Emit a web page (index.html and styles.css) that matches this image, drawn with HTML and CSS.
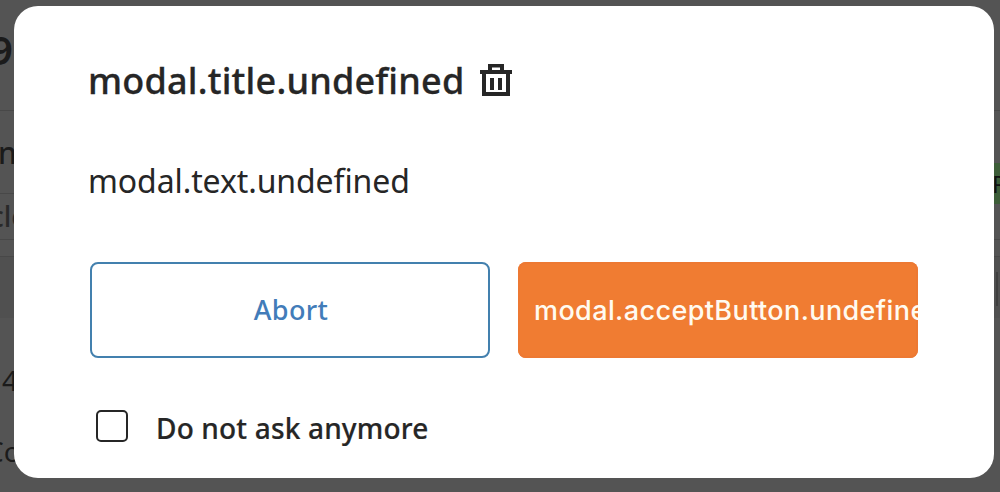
FILE: index.html
```html
<!DOCTYPE html>
<html lang="en">
<head>
<meta charset="utf-8">
<title>Confirm</title>
<link rel="stylesheet" href="styles.css">
</head>
<body>
<div class="stage">
  <div class="page">
    <div class="row row-heading"><span class="edge">9</span></div>
    <div class="row row-name"><span class="edge">n</span><span class="badge">R</span></div>
    <div class="row row-article"><span class="edge">cle</span></div>
    <div class="row row-gap"></div>
    <div class="row row-band"><span class="handle"></span></div>
    <div class="row row-count"><span class="edge">4</span></div>
    <div class="row row-code"><span class="edge">Co</span></div>
  </div>
  <main class="modal" role="dialog">
    <h1 class="title"><span class="title-text">modal.title.undefined</span>
      <svg class="trash" viewBox="0 0 32 32" width="32" height="32" fill="#262626" fill-rule="evenodd"><path d="M8 0H24V6H32V10H30V32H2V10H0V6H8ZM12 3.5V6H20V3.5ZM6 10V28H26V10ZM10 14H14V26H10ZM18 14H22V26H18Z"/></svg>
    </h1>
    <p class="text">modal.text.undefined</p>
    <div class="actions">
      <button class="btn abort"><span class="abort-label">Abort</span></button>
      <button class="btn accept"><span class="accept-label">modal.acceptButton.undefined</span></button>
    </div>
    <label class="check"><span class="box"></span><span class="check-label">Do not ask anymore</span></label>
  </main>
</div>
</body>
</html>
```
FILE: styles.css
```css
* { box-sizing: border-box; }
body { margin: 0; background: #545454; font-family: "Noto Sans", "Open Sans", sans-serif; color: #262626; }
.stage { position: relative; width: 1000px; height: 492px; overflow: hidden; }
.page { display: flex; flex-direction: column; color: #1b1b1b; }
.row { display: flex; justify-content: space-between; flex: none; border-bottom: 1px solid #484848; white-space: nowrap; overflow: hidden; font-size: 28px; line-height: 40px; }
.row-heading { height: 111px; padding-top: 30px; font-size: 40px; }
.row-heading .edge { margin-left: -10px; font-weight: 600; }
.row-name { height: 83px; font-size: 30px; overflow: visible; }
.row-name .edge { margin-left: -2px; padding-top: 22px; font-weight: 500; }
.badge { flex: none; width: 8px; height: 41px; margin: 52px 0 -12px; padding-top: 1px; background: #3d5d38; color: #111; font-size: 24px; overflow: hidden; }
.row-article { height: 46px; padding-top: 2px; color: #292929; }
.row-article .edge { margin-left: -10px; font-weight: 500; }
.row-gap { height: 17px; }
.row-band { height: 61px; background: #505050; border: 0; }
.handle { width: 2px; height: 34px; margin: 15px 2px 0 auto; background: #3f3f3f; }
.row-count { height: 74px; padding-top: 42px; border: 0; }
.row-count .edge { margin-left: 2px; }
.row-code { height: 100px; padding-top: 39px; border: 0; }
.row-code .edge { margin-left: -14px; }

.modal { position: absolute; left: 14px; top: 6px; width: 980px; height: 472px; padding: 48px 76px 0; border-radius: 24px; background: #fff; }
.title { display: flex; align-items: center; gap: 17px; margin: 0; height: 52px; font-size: 36px; font-weight: 500; line-height: 50px; }
.title-text { width: 375px; margin-left: -2px; padding-top: 2px; white-space: nowrap; letter-spacing: 0.2px; -webkit-text-stroke: 0.3px #262626; }
.trash { display: block; }
.text { margin: 50px 0 0 -2px; height: 50px; font-size: 32px; line-height: 49px; letter-spacing: -0.1px; }
.actions { display: flex; gap: 28px; margin-top: 56px; }
.btn { width: 400px; height: 96px; padding: 0 12px 0 14px; border: 2px solid #4380ae; border-radius: 8px; background: #fff; overflow: hidden; white-space: nowrap; font: 500 27px/40px "Noto Sans", sans-serif; letter-spacing: 0.4px; color: #427cb9; }
.accept { padding: 0 0 0 16px; border: 0; box-shadow: inset 0 0 0 2px #ed7933; background: #f07c32; color: #fffaf0; text-align: left; }
.accept-label { font: 500 27px/40px Inter, sans-serif; letter-spacing: 0.4px; }
.check { display: flex; align-items: center; gap: 28px; height: 40px; margin: 48px 0 0 6px; }
.box { width: 32px; height: 32px; border: 2px solid #262626; border-radius: 5px; }
.check-label { padding-top: 3px; font-size: 28px; font-weight: 500; line-height: 40px; letter-spacing: 0.17px; white-space: nowrap; -webkit-text-stroke: 0.2px #262626; }
```
